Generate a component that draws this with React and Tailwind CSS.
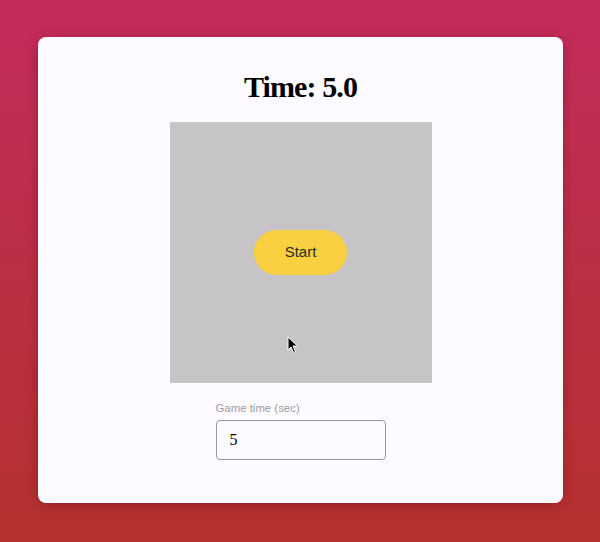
import React from "react";

export default function App() {
  return (
    <div className="w-[600px] h-[542px] bg-gradient-to-b from-[#c42b5b] to-[#b4312d] pt-[37px] pl-[38px]">
      <div className="w-[525px] h-[466px] bg-[#fdfbff] rounded-[8px] shadow-[0_2px_12px_rgba(80,0,20,0.35)] flex flex-col items-center">
        <h1 className="mt-[31px] h-[37px] leading-[37px] text-[30px] tracking-[-0.9px] font-bold text-black font-['Liberation_Serif',serif]">
          Time: 5.0
        </h1>
        <div className="relative mt-[17px] w-[262px] h-[261px] bg-[#c6c4c6] flex items-center justify-center">
          <button className="w-[93px] h-[45px] rounded-full bg-[#f9d042] text-[15px] text-[#2b2b2b] font-['Liberation_Sans',sans-serif]">
            Start
          </button>
          <svg className="absolute left-[117px] top-[214px]" width="12" height="18" viewBox="0 0 12 18">
            <path d="M1 1 L1 14 L4 11 L6.5 16.5 L8.5 15.5 L6 10 L10.5 10 Z" fill="#000" stroke="#fff" strokeWidth="1" />
          </svg>
        </div>
        <div className="mt-[18px] w-[170px] flex flex-col">
          <label className="text-[11.4px] leading-[14px] text-[#9a9a9a] font-['Liberation_Sans',sans-serif]">
            Game time (sec)
          </label>
          <div className="mt-[5px] w-[170px] h-[40px] border border-[#999] rounded-[4px] px-[13px] flex items-center text-[16px] text-black font-['Liberation_Serif',serif]">
            5
          </div>
        </div>
      </div>
    </div>
  );
}
